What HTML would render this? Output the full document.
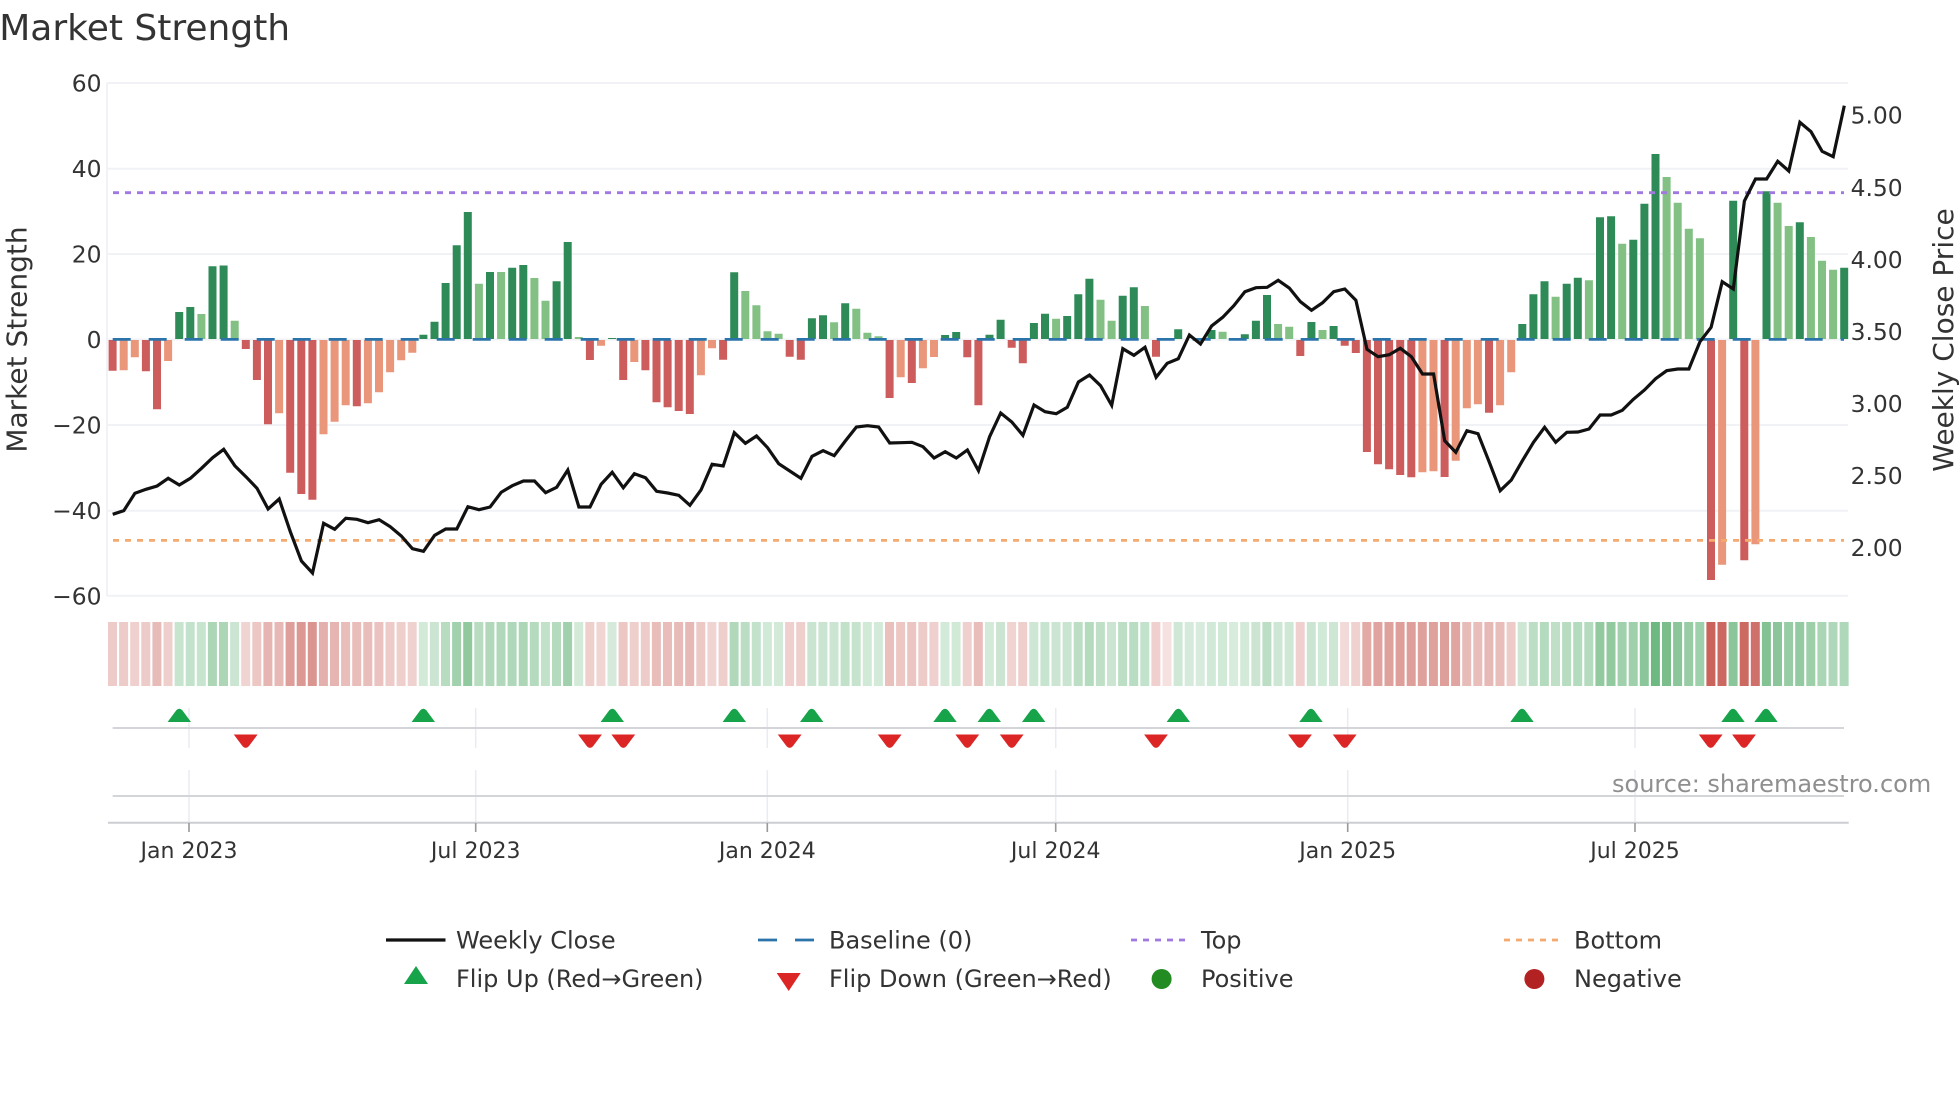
<!DOCTYPE html>
<html lang="en">
<head>
<meta charset="utf-8">
<title>Market Strength</title>
<style>
html,body{margin:0;padding:0;background:#fff;width:1960px;height:1102px;overflow:hidden}
svg{display:block}
text{font-family:"DejaVu Sans","Liberation Sans",sans-serif;fill:#333}
.t{font-size:23.4px}
.x{font-size:22px;text-anchor:middle}
.l{font-size:24px}
</style>
</head>
<body>
<svg width="1960" height="1102" viewBox="0 0 1960 1102" xmlns="http://www.w3.org/2000/svg">
<rect width="1960" height="1102" fill="#fff"/>
<defs>
<path id="u" d="M-11.7 722H11.7L3 710.2Q0 707.2-3 710.2Z" fill="#16a34a"/>
<path id="d" d="M-11.9 734.5H11.9L3 746.4Q0 749.4-3 746.4Z" fill="#dc2626"/>
</defs>

<text x="-0.8" y="40" style="font-size:36px">Market Strength</text>

<g stroke="#f1f2f6" stroke-width="2" fill="none">
<path d="M107 83H1848M107 168.7H1848M107 254H1848M107 339.5H1848M107 425H1848M107 510.7H1848M107 595.7H1848M107 83V596"/>
</g>

<g class="t">
<text x="101.5" y="91.3" text-anchor="end">60</text>
<text x="101.5" y="176.8" text-anchor="end">40</text>
<text x="101.5" y="262.3" text-anchor="end">20</text>
<text x="101.5" y="347.8" text-anchor="end">0</text>
<text x="101.5" y="433.3" text-anchor="end">−20</text>
<text x="101.5" y="518.8" text-anchor="end">−40</text>
<text x="101.5" y="604.3" text-anchor="end">−60</text>
</g>
<g class="t">
<text x="1850.6" y="123.7">5.00</text>
<text x="1850.6" y="195.9">4.50</text>
<text x="1850.6" y="268">4.00</text>
<text x="1850.6" y="340">3.50</text>
<text x="1850.6" y="412">3.00</text>
<text x="1850.6" y="484">2.50</text>
<text x="1850.6" y="556">2.00</text>
</g>
<text transform="translate(26.7 339.5) rotate(-90)" text-anchor="middle" style="font-size:28px">Market Strength</text>
<text transform="translate(1953 340) rotate(-90)" text-anchor="middle" style="font-size:28px">Weekly Close Price</text>

<path fill="#2e8b57" d="M175.2 339v-27h8v27zM186.3 339v-32h8v32zM208.5 339v-72.7h8v72.7zM219.6 339v-73.5h8v73.5zM419.4 339v-4.3h8v4.3zM430.5 339v-17.3h8v17.3zM441.6 339v-56h8v56zM452.7 339v-93.7h8v93.7zM463.8 339v-127h8v127zM486 339v-67h8v67zM508.2 339v-71.3h8v71.3zM519.3 339v-74h8v74zM552.6 339v-57.7h8v57.7zM563.7 339v-97h8v97zM608.1 339v-1h8v1zM730.2 339v-66.7h8v66.7zM807.9 339v-20.7h8v20.7zM819 339v-23.7h8v23.7zM841.2 339v-35.7h8v35.7zM941.1 339v-4h8v4zM952.2 339v-7h8v7zM985.5 339v-4.3h8v4.3zM996.6 339v-19.3h8v19.3zM1029.9 339v-16h8v16zM1041 339v-25.3h8v25.3zM1063.2 339v-23h8v23zM1074.3 339v-44.7h8v44.7zM1085.4 339v-60.3h8v60.3zM1118.7 339v-43.3h8v43.3zM1129.8 339v-51.7h8v51.7zM1174.2 339v-9.7h8v9.7zM1207.5 339v-9h8v9zM1240.8 339v-4.7h8v4.7zM1251.9 339v-18.3h8v18.3zM1263 339v-44h8v44zM1307.4 339v-17h8v17zM1329.6 339v-13h8v13zM1518.3 339v-15h8v15zM1529.4 339v-44.7h8v44.7zM1540.5 339v-57.7h8v57.7zM1562.7 339v-55.3h8v55.3zM1573.8 339v-61.3h8v61.3zM1596 339v-121.7h8v121.7zM1607.1 339v-122.7h8v122.7zM1629.3 339v-99.3h8v99.3zM1640.4 339v-135.3h8v135.3zM1651.5 339v-185h8v185zM1729.2 339v-138.3h8v138.3zM1762.5 339v-147.7h8v147.7zM1795.8 339v-116.7h8v116.7zM1840.2 339v-71.3h8v71.3z"/>
<path fill="#82c083" d="M197.4 339v-25h8v25zM230.7 339v-18.3h8v18.3zM474.9 339v-55.3h8v55.3zM497.1 339v-67h8v67zM530.4 339v-61h8v61zM541.5 339v-38.3h8v38.3zM574.8 339v-2h8v2zM741.3 339v-48h8v48zM752.4 339v-33.7h8v33.7zM763.5 339v-7.7h8v7.7zM774.6 339v-5.3h8v5.3zM830.1 339v-16.7h8v16.7zM852.3 339v-30.3h8v30.3zM863.4 339v-6.3h8v6.3zM874.5 339v-2.7h8v2.7zM1052.1 339v-20.3h8v20.3zM1096.5 339v-39.3h8v39.3zM1107.6 339v-18.3h8v18.3zM1140.9 339v-33h8v33zM1218.6 339v-7.3h8v7.3zM1274.1 339v-15h8v15zM1285.2 339v-12.3h8v12.3zM1318.5 339v-9h8v9zM1551.6 339v-42.3h8v42.3zM1584.9 339v-58.7h8v58.7zM1618.2 339v-95.3h8v95.3zM1662.6 339v-162h8v162zM1673.7 339v-136.3h8v136.3zM1684.8 339v-110.3h8v110.3zM1695.9 339v-100.7h8v100.7zM1773.6 339v-136.3h8v136.3zM1784.7 339v-113h8v113zM1806.9 339v-102h8v102zM1818 339v-78.3h8v78.3zM1829.1 339v-69.3h8v69.3z"/>
<path fill="#cd5c5c" d="M108.6 340v30.7h8v-30.7zM141.9 340v31.3h8v-31.3zM153 340v69.3h8v-69.3zM241.8 340v9h8v-9zM252.9 340v40h8v-40zM264 340v84.3h8v-84.3zM286.2 340v132.7h8v-132.7zM297.3 340v154h8v-154zM308.4 340v159.7h8v-159.7zM352.8 340v66.3h8v-66.3zM585.9 340v20h8v-20zM619.2 340v40h8v-40zM641.4 340v30.3h8v-30.3zM652.5 340v62.3h8v-62.3zM663.6 340v67.3h8v-67.3zM674.7 340v71h8v-71zM685.8 340v74h8v-74zM719.1 340v19.7h8v-19.7zM785.7 340v16.7h8v-16.7zM796.8 340v19.7h8v-19.7zM885.6 340v58h8v-58zM907.8 340v43h8v-43zM963.3 340v17.3h8v-17.3zM974.4 340v65.3h8v-65.3zM1007.7 340v7.7h8v-7.7zM1018.8 340v23.3h8v-23.3zM1152 340v16.7h8v-16.7zM1296.3 340v16h8v-16zM1340.7 340v5.7h8v-5.7zM1351.8 340v13h8v-13zM1362.9 340v112h8v-112zM1374 340v124.3h8v-124.3zM1385.1 340v129.3h8v-129.3zM1396.2 340v135h8v-135zM1407.3 340v137.3h8v-137.3zM1440.6 340v137h8v-137zM1485 340v72.7h8v-72.7zM1707 340v240h8v-240zM1740.3 340v220.3h8v-220.3z"/>
<path fill="#e9967a" d="M119.7 340v30.3h8v-30.3zM130.8 340v17.3h8v-17.3zM164.1 340v21h8v-21zM275.1 340v73.3h8v-73.3zM319.5 340v94.3h8v-94.3zM330.6 340v81.7h8v-81.7zM341.7 340v65.3h8v-65.3zM363.9 340v63.3h8v-63.3zM375 340v52.3h8v-52.3zM386.1 340v32.3h8v-32.3zM397.2 340v20.3h8v-20.3zM408.3 340v12.7h8v-12.7zM597 340v5.7h8v-5.7zM630.3 340v22h8v-22zM696.9 340v35.3h8v-35.3zM708 340v8.3h8v-8.3zM896.7 340v37.3h8v-37.3zM918.9 340v28.3h8v-28.3zM930 340v17h8v-17zM1418.4 340v132.3h8v-132.3zM1429.5 340v131.3h8v-131.3zM1451.7 340v120.7h8v-120.7zM1462.8 340v68.3h8v-68.3zM1473.9 340v64.3h8v-64.3zM1496.1 340v65.3h8v-65.3zM1507.2 340v32.3h8v-32.3zM1718.1 340v224.7h8v-224.7zM1751.4 340v204.3h8v-204.3z"/>

<path d="M112.7 339.4H1844" stroke="#2b74ab" stroke-width="2.7" stroke-dasharray="18 18" fill="none"/>
<path d="M113 192.7H1844" stroke="#a078e0" stroke-width="2.8" stroke-dasharray="6 6" fill="none"/>
<path d="M113 540.4H1844" stroke="#f4a96e" stroke-width="2.8" stroke-dasharray="6 6" fill="none"/>

<polyline transform="translate(4.1 0)" fill="none" stroke="#111" stroke-width="3.2" stroke-linejoin="miter" points="108.6,514.3 119.7,510.7 130.8,493.3 141.9,489.3 153,486 164.1,478.3 175.2,485 186.3,478.3 197.4,468.3 208.5,457.7 219.6,449.3 230.7,465.7 241.8,476.7 252.9,488.3 264,509 275.1,499 286.2,531.7 297.3,561 308.4,573 319.5,523.3 330.6,529.3 341.7,518.3 352.8,519.3 363.9,522.7 375,519.7 386.1,526.7 397.2,536 408.3,548.7 419.4,551.3 430.5,535.3 441.6,529 452.7,529 463.8,506.7 474.9,509.7 486,507 497.1,492.3 508.2,485.7 519.3,481 530.4,481 541.5,492.7 552.6,487.3 563.7,470 574.8,507 585.9,507 597,484.3 608.1,472.3 619.2,487.7 630.3,473.7 641.4,477.7 652.5,491.3 663.6,493 674.7,495.3 685.8,505.3 696.9,490 708,464.3 719.1,466 730.2,432.7 741.3,443.3 752.4,436 763.5,447.7 774.6,463.7 785.7,471 796.8,478.3 807.9,456.3 819,450.7 830.1,455.7 841.2,441 852.3,427 863.4,425.7 874.5,427 885.6,443 896.7,442.7 907.8,442.3 918.9,446.7 930,458 941.1,451.7 952.2,458 963.3,450 974.4,470.7 985.5,436.7 996.6,413 1007.7,422 1018.8,435.3 1029.9,405 1041,411.7 1052.1,413.7 1063.2,407.3 1074.3,382 1085.4,375 1096.5,385.7 1107.6,405.3 1118.7,348.7 1129.8,355.3 1140.9,347.3 1152,377.3 1163.1,363.3 1174.2,358.7 1185.3,335 1196.4,344 1207.5,326 1218.6,317.3 1229.7,305.7 1240.8,291.7 1251.9,287.7 1263,287.3 1274.1,280.3 1285.2,288 1296.3,301.7 1307.4,310.3 1318.5,302.7 1329.6,291.7 1340.7,289 1351.8,300.3 1362.9,349.3 1374,356.7 1385.1,354.7 1396.2,348.3 1407.3,356.7 1418.4,374 1429.5,374 1440.6,440.7 1451.7,452.3 1462.8,430.7 1473.9,433.7 1485,461.7 1496.1,490.7 1507.2,480 1518.3,460.7 1529.4,442.3 1540.5,427.3 1551.6,442.3 1562.7,432.3 1573.8,432 1584.9,429 1596,415 1607.1,415 1618.2,410.3 1629.3,399.3 1640.4,390 1651.5,378.7 1662.6,370.7 1673.7,369 1684.8,369 1695.9,341.7 1707,327.3 1718.1,281.7 1729.2,289 1740.3,201 1751.4,179 1762.5,179 1773.6,161.3 1784.7,171 1795.8,122.3 1806.9,131.7 1818,151.3 1829.1,156.7 1840.2,105.7"/>

<g fill="#b93228" opacity=".88">
<path d="M108 622h9v64h-9z" fill-opacity=".29"/>
<path d="M119.1 622h9v64h-9z" fill-opacity=".29"/>
<path d="M130.2 622h9v64h-9z" fill-opacity=".26"/>
<path d="M141.3 622h9v64h-9z" fill-opacity=".29"/>
<path d="M152.4 622h9v64h-9z" fill-opacity=".38"/>
<path d="M163.5 622h9v64h-9z" fill-opacity=".27"/>
<path d="M241.2 622h9v64h-9z" fill-opacity=".24"/>
<path d="M252.3 622h9v64h-9z" fill-opacity=".31"/>
<path d="M263.4 622h9v64h-9z" fill-opacity=".41"/>
<path d="M274.5 622h9v64h-9z" fill-opacity=".39"/>
<path d="M285.6 622h9v64h-9z" fill-opacity=".53"/>
<path d="M296.7 622h9v64h-9z" fill-opacity=".57"/>
<path d="M307.8 622h9v64h-9z" fill-opacity=".59"/>
<path d="M318.9 622h9v64h-9z" fill-opacity=".44"/>
<path d="M330 622h9v64h-9z" fill-opacity=".41"/>
<path d="M341.1 622h9v64h-9z" fill-opacity=".37"/>
<path d="M352.2 622h9v64h-9z" fill-opacity=".37"/>
<path d="M363.3 622h9v64h-9z" fill-opacity=".37"/>
<path d="M374.4 622h9v64h-9z" fill-opacity=".34"/>
<path d="M385.5 622h9v64h-9z" fill-opacity=".29"/>
<path d="M396.6 622h9v64h-9z" fill-opacity=".27"/>
<path d="M407.7 622h9v64h-9z" fill-opacity=".25"/>
<path d="M585.3 622h9v64h-9z" fill-opacity=".27"/>
<path d="M596.4 622h9v64h-9z" fill-opacity=".23"/>
<path d="M618.6 622h9v64h-9z" fill-opacity=".31"/>
<path d="M629.7 622h9v64h-9z" fill-opacity=".27"/>
<path d="M640.8 622h9v64h-9z" fill-opacity=".29"/>
<path d="M651.9 622h9v64h-9z" fill-opacity=".36"/>
<path d="M663 622h9v64h-9z" fill-opacity=".37"/>
<path d="M674.1 622h9v64h-9z" fill-opacity=".38"/>
<path d="M685.2 622h9v64h-9z" fill-opacity=".39"/>
<path d="M696.3 622h9v64h-9z" fill-opacity=".30"/>
<path d="M707.4 622h9v64h-9z" fill-opacity=".24"/>
<path d="M718.5 622h9v64h-9z" fill-opacity=".27"/>
<path d="M785.1 622h9v64h-9z" fill-opacity=".26"/>
<path d="M796.2 622h9v64h-9z" fill-opacity=".27"/>
<path d="M885 622h9v64h-9z" fill-opacity=".35"/>
<path d="M896.1 622h9v64h-9z" fill-opacity=".31"/>
<path d="M907.2 622h9v64h-9z" fill-opacity=".32"/>
<path d="M918.3 622h9v64h-9z" fill-opacity=".29"/>
<path d="M929.4 622h9v64h-9z" fill-opacity=".26"/>
<path d="M962.7 622h9v64h-9z" fill-opacity=".26"/>
<path d="M973.8 622h9v64h-9z" fill-opacity=".37"/>
<path d="M1007.1 622h9v64h-9z" fill-opacity=".24"/>
<path d="M1018.2 622h9v64h-9z" fill-opacity=".27"/>
<path d="M1151.4 622h9v64h-9z" fill-opacity=".26"/>
<path d="M1162.5 622h9v64h-9z" fill-opacity=".17"/>
<path d="M1295.7 622h9v64h-9z" fill-opacity=".26"/>
<path d="M1340.1 622h9v64h-9z" fill-opacity=".2"/>
<path d="M1351.2 622h9v64h-9z" fill-opacity=".25"/>
<path d="M1362.3 622h9v64h-9z" fill-opacity=".48"/>
<path d="M1373.4 622h9v64h-9z" fill-opacity=".51"/>
<path d="M1384.5 622h9v64h-9z" fill-opacity=".52"/>
<path d="M1395.6 622h9v64h-9z" fill-opacity=".53"/>
<path d="M1406.7 622h9v64h-9z" fill-opacity=".54"/>
<path d="M1417.8 622h9v64h-9z" fill-opacity=".52"/>
<path d="M1428.9 622h9v64h-9z" fill-opacity=".52"/>
<path d="M1440 622h9v64h-9z" fill-opacity=".54"/>
<path d="M1451.1 622h9v64h-9z" fill-opacity=".50"/>
<path d="M1462.2 622h9v64h-9z" fill-opacity=".38"/>
<path d="M1473.3 622h9v64h-9z" fill-opacity=".37"/>
<path d="M1484.4 622h9v64h-9z" fill-opacity=".39"/>
<path d="M1495.5 622h9v64h-9z" fill-opacity=".37"/>
<path d="M1506.6 622h9v64h-9z" fill-opacity=".29"/>
<path d="M1706.4 622h9v64h-9z" fill-opacity=".87"/>
<path d="M1717.5 622h9v64h-9z" fill-opacity=".84"/>
<path d="M1739.7 622h9v64h-9z" fill-opacity=".83"/>
<path d="M1750.8 622h9v64h-9z" fill-opacity=".79"/>
</g>
<g fill="#148c32" opacity=".88">
<path d="M174.6 622h9v64h-9z" fill-opacity=".27"/>
<path d="M185.7 622h9v64h-9z" fill-opacity=".29"/>
<path d="M196.8 622h9v64h-9z" fill-opacity=".27"/>
<path d="M207.9 622h9v64h-9z" fill-opacity=".40"/>
<path d="M219 622h9v64h-9z" fill-opacity=".40"/>
<path d="M230.1 622h9v64h-9z" fill-opacity=".25"/>
<path d="M418.8 622h9v64h-9z" fill-opacity=".21"/>
<path d="M429.9 622h9v64h-9z" fill-opacity=".25"/>
<path d="M441 622h9v64h-9z" fill-opacity=".35"/>
<path d="M452.1 622h9v64h-9z" fill-opacity=".45"/>
<path d="M463.2 622h9v64h-9z" fill-opacity=".54"/>
<path d="M474.3 622h9v64h-9z" fill-opacity=".35"/>
<path d="M485.4 622h9v64h-9z" fill-opacity=".38"/>
<path d="M496.5 622h9v64h-9z" fill-opacity=".38"/>
<path d="M507.6 622h9v64h-9z" fill-opacity=".39"/>
<path d="M518.7 622h9v64h-9z" fill-opacity=".40"/>
<path d="M529.8 622h9v64h-9z" fill-opacity=".36"/>
<path d="M540.9 622h9v64h-9z" fill-opacity=".30"/>
<path d="M552 622h9v64h-9z" fill-opacity=".36"/>
<path d="M563.1 622h9v64h-9z" fill-opacity=".46"/>
<path d="M574.2 622h9v64h-9z" fill-opacity=".21"/>
<path d="M607.5 622h9v64h-9z" fill-opacity=".20"/>
<path d="M729.6 622h9v64h-9z" fill-opacity=".38"/>
<path d="M740.7 622h9v64h-9z" fill-opacity=".33"/>
<path d="M751.8 622h9v64h-9z" fill-opacity=".29"/>
<path d="M762.9 622h9v64h-9z" fill-opacity=".22"/>
<path d="M774 622h9v64h-9z" fill-opacity=".21"/>
<path d="M807.3 622h9v64h-9z" fill-opacity=".26"/>
<path d="M818.4 622h9v64h-9z" fill-opacity=".26"/>
<path d="M829.5 622h9v64h-9z" fill-opacity=".25"/>
<path d="M840.6 622h9v64h-9z" fill-opacity=".30"/>
<path d="M851.7 622h9v64h-9z" fill-opacity=".28"/>
<path d="M862.8 622h9v64h-9z" fill-opacity=".22"/>
<path d="M873.9 622h9v64h-9z" fill-opacity=".21"/>
<path d="M940.5 622h9v64h-9z" fill-opacity=".21"/>
<path d="M951.6 622h9v64h-9z" fill-opacity=".22"/>
<path d="M984.9 622h9v64h-9z" fill-opacity=".21"/>
<path d="M996 622h9v64h-9z" fill-opacity=".25"/>
<path d="M1029.3 622h9v64h-9z" fill-opacity=".24"/>
<path d="M1040.4 622h9v64h-9z" fill-opacity=".27"/>
<path d="M1051.5 622h9v64h-9z" fill-opacity=".25"/>
<path d="M1062.6 622h9v64h-9z" fill-opacity=".26"/>
<path d="M1073.7 622h9v64h-9z" fill-opacity=".32"/>
<path d="M1084.8 622h9v64h-9z" fill-opacity=".36"/>
<path d="M1095.9 622h9v64h-9z" fill-opacity=".31"/>
<path d="M1107 622h9v64h-9z" fill-opacity=".25"/>
<path d="M1118.1 622h9v64h-9z" fill-opacity=".32"/>
<path d="M1129.2 622h9v64h-9z" fill-opacity=".34"/>
<path d="M1140.3 622h9v64h-9z" fill-opacity=".29"/>
<path d="M1173.6 622h9v64h-9z" fill-opacity=".23"/>
<path d="M1184.7 622h9v64h-9z" fill-opacity=".2"/>
<path d="M1195.8 622h9v64h-9z" fill-opacity=".19"/>
<path d="M1206.9 622h9v64h-9z" fill-opacity=".22"/>
<path d="M1218 622h9v64h-9z" fill-opacity=".22"/>
<path d="M1229.1 622h9v64h-9z" fill-opacity=".19"/>
<path d="M1240.2 622h9v64h-9z" fill-opacity=".21"/>
<path d="M1251.3 622h9v64h-9z" fill-opacity=".25"/>
<path d="M1262.4 622h9v64h-9z" fill-opacity=".32"/>
<path d="M1273.5 622h9v64h-9z" fill-opacity=".24"/>
<path d="M1284.6 622h9v64h-9z" fill-opacity=".23"/>
<path d="M1306.8 622h9v64h-9z" fill-opacity=".25"/>
<path d="M1317.9 622h9v64h-9z" fill-opacity=".22"/>
<path d="M1329 622h9v64h-9z" fill-opacity=".24"/>
<path d="M1517.7 622h9v64h-9z" fill-opacity=".24"/>
<path d="M1528.8 622h9v64h-9z" fill-opacity=".32"/>
<path d="M1539.9 622h9v64h-9z" fill-opacity=".36"/>
<path d="M1551 622h9v64h-9z" fill-opacity=".31"/>
<path d="M1562.1 622h9v64h-9z" fill-opacity=".35"/>
<path d="M1573.2 622h9v64h-9z" fill-opacity=".37"/>
<path d="M1584.3 622h9v64h-9z" fill-opacity=".36"/>
<path d="M1595.4 622h9v64h-9z" fill-opacity=".53"/>
<path d="M1606.5 622h9v64h-9z" fill-opacity=".53"/>
<path d="M1617.6 622h9v64h-9z" fill-opacity=".46"/>
<path d="M1628.7 622h9v64h-9z" fill-opacity=".47"/>
<path d="M1639.8 622h9v64h-9z" fill-opacity=".57"/>
<path d="M1650.9 622h9v64h-9z" fill-opacity=".70"/>
<path d="M1662 622h9v64h-9z" fill-opacity=".64"/>
<path d="M1673.1 622h9v64h-9z" fill-opacity=".57"/>
<path d="M1684.2 622h9v64h-9z" fill-opacity=".50"/>
<path d="M1695.3 622h9v64h-9z" fill-opacity=".47"/>
<path d="M1728.6 622h9v64h-9z" fill-opacity=".57"/>
<path d="M1761.9 622h9v64h-9z" fill-opacity=".60"/>
<path d="M1773 622h9v64h-9z" fill-opacity=".57"/>
<path d="M1784.1 622h9v64h-9z" fill-opacity=".50"/>
<path d="M1795.2 622h9v64h-9z" fill-opacity=".52"/>
<path d="M1806.3 622h9v64h-9z" fill-opacity=".48"/>
<path d="M1817.4 622h9v64h-9z" fill-opacity=".41"/>
<path d="M1828.5 622h9v64h-9z" fill-opacity=".39"/>
<path d="M1839.6 622h9v64h-9z" fill-opacity=".39"/>
</g>

<path d="M189 708V748M189 770V823M475.7 708V748M475.7 770V823M767.3 708V748M767.3 770V823M1055.7 708V748M1055.7 770V823M1347.7 708V748M1347.7 770V823M1635 708V748M1635 770V823" stroke="#e9ecf2" stroke-width="1.5" fill="none"/>
<path d="M112.7 728H1844M112.7 796H1844" stroke="#d3d5d9" stroke-width="2" fill="none"/>
<path d="M108 822.8H1848.7" stroke="#ccced2" stroke-width="2" fill="none"/>
<path d="M189 823V832M475.7 823V832M767.3 823V832M1055.7 823V832M1347.7 823V832M1635 823V832" stroke="#999" stroke-width="1.6" fill="none"/>

<use href="#u" x="179.3"/><use href="#u" x="423.3"/><use href="#u" x="612.3"/><use href="#u" x="734.3"/><use href="#u" x="811.7"/><use href="#u" x="945"/><use href="#u" x="989.3"/><use href="#u" x="1033.7"/><use href="#u" x="1178.3"/><use href="#u" x="1311"/><use href="#u" x="1522"/><use href="#u" x="1733"/><use href="#u" x="1766"/>
<use href="#d" x="245.7"/><use href="#d" x="590"/><use href="#d" x="623.3"/><use href="#d" x="789.7"/><use href="#d" x="889.7"/><use href="#d" x="967.3"/><use href="#d" x="1011.7"/><use href="#d" x="1156"/><use href="#d" x="1300"/><use href="#d" x="1344.7"/><use href="#d" x="1710.7"/><use href="#d" x="1744"/>

<text x="1612" y="792" style="font-size:24px;fill:#8f8f8f">source: sharemaestro.com</text>

<text class="x" x="189" y="858">Jan 2023</text>
<text class="x" x="475.7" y="858">Jul 2023</text>
<text class="x" x="767.3" y="858">Jan 2024</text>
<text class="x" x="1055.7" y="858">Jul 2024</text>
<text class="x" x="1347.7" y="858">Jan 2025</text>
<text class="x" x="1635" y="858">Jul 2025</text>

<path d="M386 940H445.5" stroke="#111" stroke-width="3.2" fill="none"/>
<path d="M758 940H814" stroke="#2b74ab" stroke-width="2.7" stroke-dasharray="19 18" fill="none"/>
<path d="M1131 940H1187" stroke="#a078e0" stroke-width="2.8" stroke-dasharray="6 6" fill="none"/>
<path d="M1504 940H1560" stroke="#f4a96e" stroke-width="2.8" stroke-dasharray="6 6" fill="none"/>
<path d="M404 984H428L416 966Z" fill="#16a34a"/>
<path d="M776.7 973H800.7L788.7 991Z" fill="#dc2626"/>
<circle cx="1161.6" cy="979" r="10" fill="#228b22"/>
<circle cx="1534.4" cy="979" r="10" fill="#b22222"/>
<text class="l" x="456" y="948.5">Weekly Close</text>
<text class="l" x="829" y="948.5">Baseline (0)</text>
<text class="l" x="1201" y="948.5">Top</text>
<text class="l" x="1574" y="948.5">Bottom</text>
<text class="l" x="456" y="987">Flip Up (Red→Green)</text>
<text class="l" x="829" y="987">Flip Down (Green→Red)</text>
<text class="l" x="1201" y="987">Positive</text>
<text class="l" x="1574" y="987">Negative</text>
</svg>
</body>
</html>
